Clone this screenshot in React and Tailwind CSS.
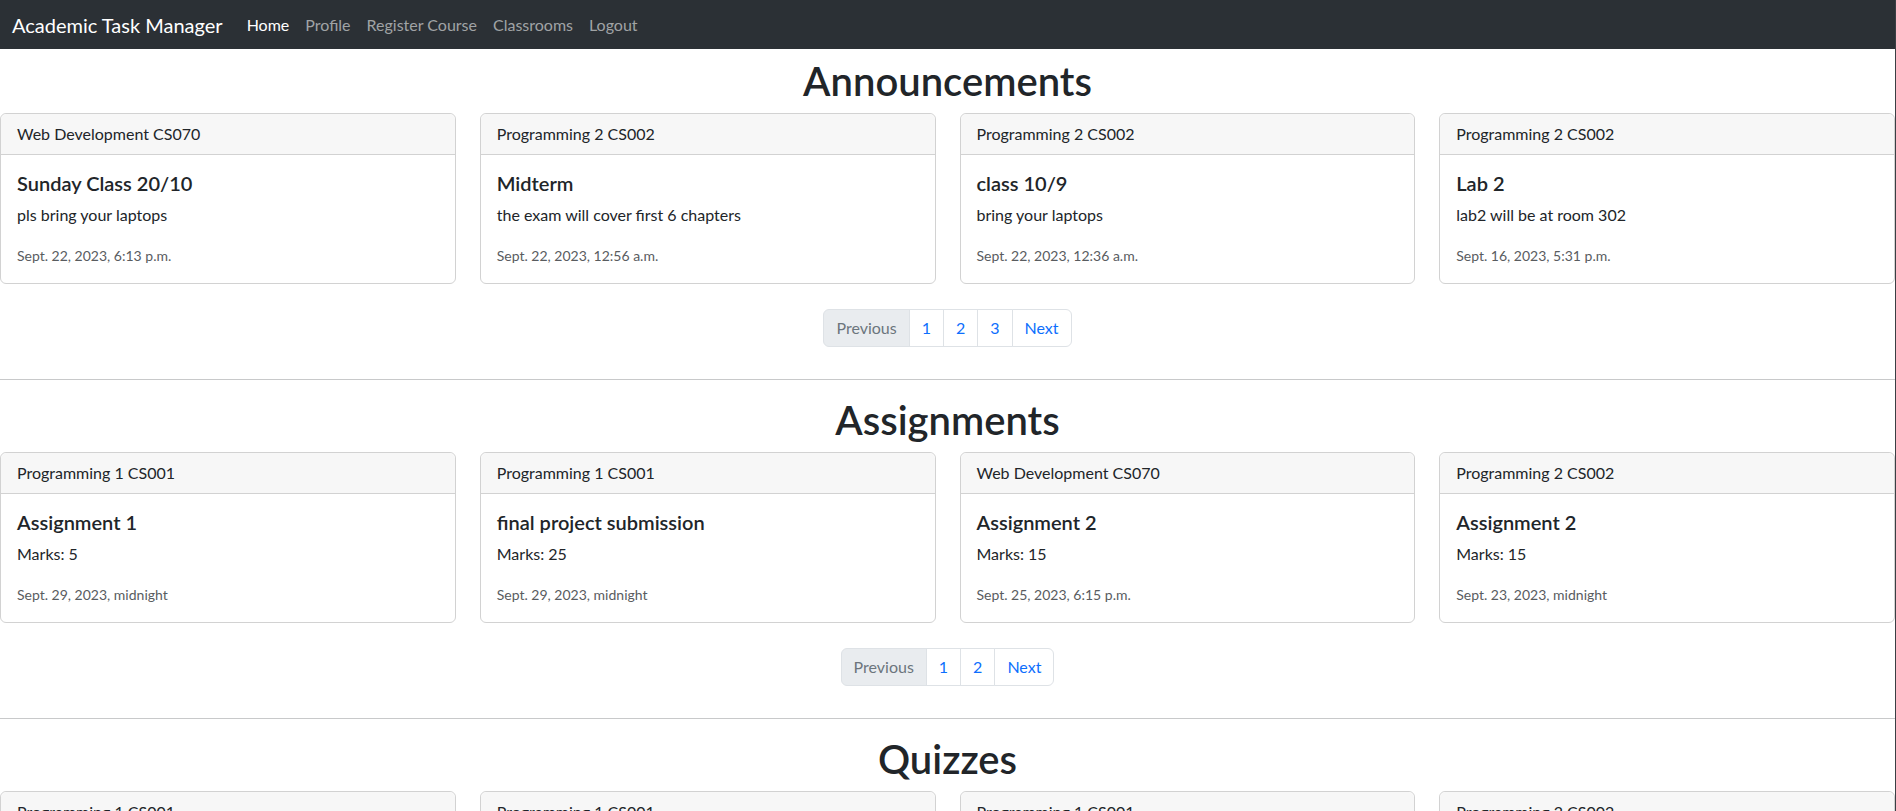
import React from 'react';

const announcements = [
  { course: 'Web Development CS070', title: 'Sunday Class 20/10', text: 'pls bring your laptops', date: 'Sept. 22, 2023, 6:13 p.m.' },
  { course: 'Programming 2 CS002', title: 'Midterm', text: 'the exam will cover first 6 chapters', date: 'Sept. 22, 2023, 12:56 a.m.' },
  { course: 'Programming 2 CS002', title: 'class 10/9', text: 'bring your laptops', date: 'Sept. 22, 2023, 12:36 a.m.' },
  { course: 'Programming 2 CS002', title: 'Lab 2', text: 'lab2 will be at room 302', date: 'Sept. 16, 2023, 5:31 p.m.' },
];

const assignments = [
  { course: 'Programming 1 CS001', title: 'Assignment 1', text: 'Marks: 5', date: 'Sept. 29, 2023, midnight' },
  { course: 'Programming 1 CS001', title: 'final project submission', text: 'Marks: 25', date: 'Sept. 29, 2023, midnight' },
  { course: 'Web Development CS070', title: 'Assignment 2', text: 'Marks: 15', date: 'Sept. 25, 2023, 6:15 p.m.' },
  { course: 'Programming 2 CS002', title: 'Assignment 2', text: 'Marks: 15', date: 'Sept. 23, 2023, midnight' },
];

const quizzes = [
  { course: 'Programming 1 CS001', title: 'Quiz 2', text: 'Marks: 10', date: 'Sept. 28, 2023, midnight' },
  { course: 'Programming 1 CS001', title: 'Quiz 1', text: 'Marks: 10', date: 'Sept. 21, 2023, midnight' },
  { course: 'Programming 1 CS001', title: 'Pop quiz', text: 'Marks: 5', date: 'Sept. 18, 2023, noon' },
  { course: 'Programming 2 CS002', title: 'Quiz 1', text: 'Marks: 10', date: 'Sept. 17, 2023, midnight' },
];

const navLinks = ['Home', 'Profile', 'Register Course', 'Classrooms', 'Logout'];

const Card = ({ item }) => (
  <div className="border border-[#d2d2d2] rounded-md bg-white">
    {/* Card header */}
    <div className="px-4 py-2 leading-6 bg-[#f7f7f7] border-b border-[#d2d2d2] rounded-t-md">{item.course}</div>
    {/* Card body */}
    <div className="p-4">
      <h5 className="text-xl font-semibold leading-6 mb-2">{item.title}</h5>
      <p className="leading-6 mb-4">{item.text}</p>
      <p className="leading-6">
        <small className="text-sm text-[#595c5f]">{item.date}</small>
      </p>
    </div>
  </div>
);

const Pagination = ({ pages }) => (
  <div className="flex justify-center pt-[25px] pb-4">
    <ul className="flex leading-6">
      <li className="px-3 py-1.5 border border-[#dee2e6] rounded-l-md bg-[#e9ecef] text-[#6c757d]">Previous</li>
      {pages.map((p) => (
        <li key={p} className="px-3 py-1.5 border border-[#dee2e6] -ml-px bg-white text-[#0d6efd]">{p}</li>
      ))}
      <li className="px-3 py-1.5 border border-[#dee2e6] -ml-px rounded-r-md bg-white text-[#0d6efd]">Next</li>
    </ul>
  </div>
);

const Section = ({ title, items, pages, last }) => (
  <section>
    <h1 className="text-[40px] font-semibold leading-[48px] text-center mb-2">{title}</h1>
    <div className="grid grid-cols-4 gap-6">
      {items.map((item, i) => (
        <Card key={i} item={item} />
      ))}
    </div>
    <Pagination pages={pages} />
    {!last && <hr className="my-4 border-0 border-t border-[#c8c9ca]" />}
  </section>
);

export default function App() {
  return (
    <div className="min-h-screen bg-white text-[#212529] text-base border-r border-[#3a3f44] font-['Lato','Noto_Sans',sans-serif]">
      {/* Navbar */}
      <nav className="h-[49px] bg-[#2b3035] flex items-center px-3">
        <span className="text-xl text-white mr-4">Academic Task Manager</span>
        <ul className="flex">
          {navLinks.map((link) => (
            <li key={link} className={`px-2 ${link === 'Home' ? 'text-white' : 'text-[#a0a3a5]'}`}>
              {link}
            </li>
          ))}
        </ul>
      </nav>

      <main className="pt-2">
        <Section title="Announcements" items={announcements} pages={[1, 2, 3]} />
        <Section title="Assignments" items={assignments} pages={[1, 2]} />
        <Section title="Quizzes" items={quizzes} pages={[1, 2]} last />
      </main>
    </div>
  );
}
